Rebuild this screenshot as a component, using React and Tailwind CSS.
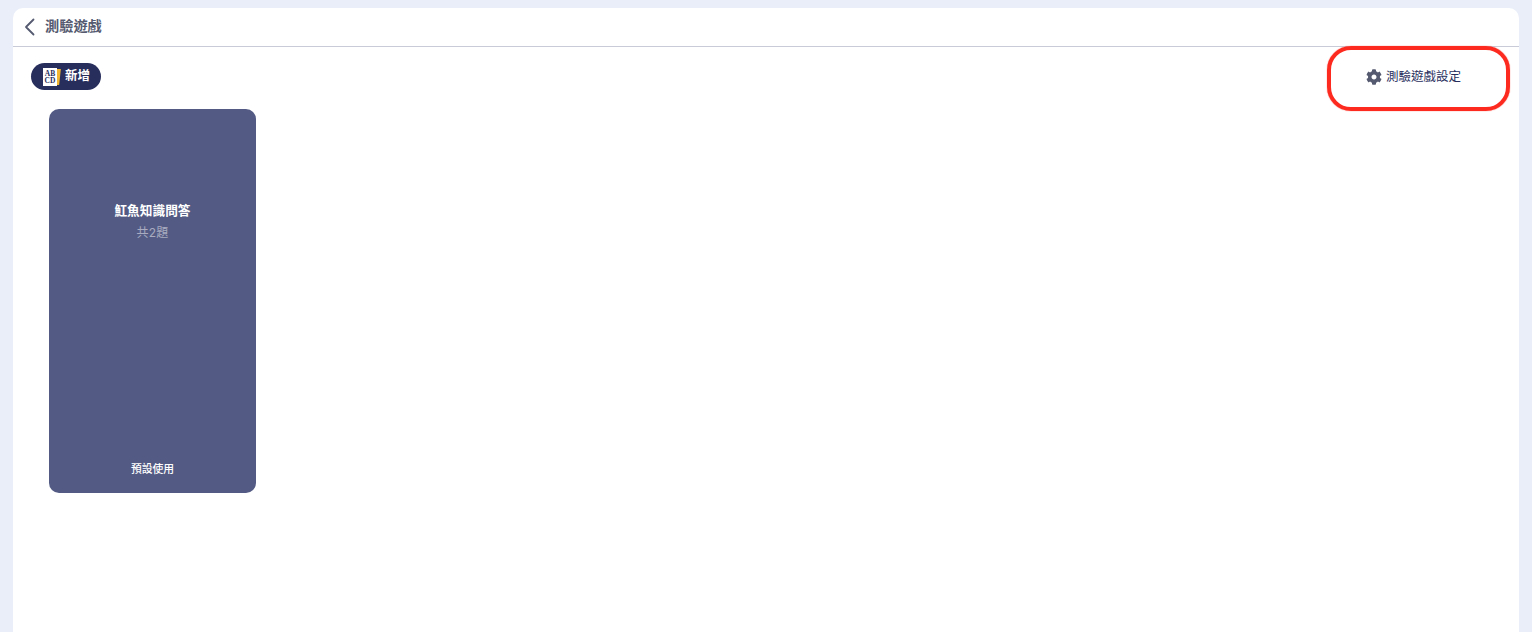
import React from 'react';
import { FaCog } from 'react-icons/fa';

const fontStack = '"Inter","Noto Sans CJK TC",sans-serif';

function QuizIcon() {
  return (
    <span className="relative block w-[18px] h-[18px] shrink-0">
      <span className="absolute left-[11px] top-[1px] w-[6px] h-[16px] bg-[#f2b632] -skew-x-6"></span>
      <span className="absolute left-0 top-0 w-[14px] h-[18px] bg-white flex flex-col items-center justify-center font-['Liberation_Serif',serif] font-bold text-[7.5px] leading-[7px] text-[#272e5c]">
        <span>AB</span>
        <span>CD</span>
      </span>
    </span>
  );
}

export default function App() {
  return (
    <div className="h-[632px] overflow-hidden bg-[#e9eef8] pt-2 pl-[13px] pr-[13px]" style={{ fontFamily: fontStack }}>
      <div className="relative h-[640px] bg-white rounded-t-[10px]">
        <div className="h-[39px] flex items-center border-b border-[#c9ccd8] pl-[9px]">
          <svg width="16" height="18" viewBox="0 0 16 18" fill="none" stroke="#555a70" strokeWidth="1.8" strokeLinecap="round" strokeLinejoin="round">
            <path d="M11.5 1.5 L4 9 L11.5 16.5" />
          </svg>
          <span className="ml-[7px] mb-[3px] text-[14.2px] leading-[20px] font-bold text-[#555a70]">測驗遊戲</span>
        </div>

        <div className="flex items-start justify-between pt-4 pl-[18px]">
          <button className="flex items-center h-[27px] w-[70px] rounded-full bg-[#272e5c] pl-3 text-white text-[12.5px] font-semibold">
            <QuizIcon />
            <span className="ml-[4px] mb-[1px]">新增</span>
          </button>
          <div className="flex items-center mr-[58px] mt-[5px] text-[12.5px] leading-[18px] text-[#272e5c]">
            <FaCog className="text-[#555a70] mr-[4px]" size={16} />
            <span>測驗遊戲設定</span>
          </div>
        </div>

        <div className="pl-9 pt-[19px]">
          <div className="w-[207px] h-[384px] rounded-[10px] bg-[#535b84] flex flex-col items-center text-white">
            <div className="mt-[93px] text-[12.7px] font-bold leading-[18px]">魟魚知識問答</div>
            <div className="mt-[5px] text-[12px] leading-[16px] text-[#a9acc0] tracking-[0.3px]">共2題</div>
            <div className="mt-auto mb-[15px] text-[10.8px] leading-[16px] font-medium">預設使用</div>
          </div>
        </div>

        {/* red annotation around settings */}
        <div className="absolute left-[1314px] top-[38px] w-[183px] h-[65px] rounded-[24px] border-[4px] border-[#fc2a1f] shadow-[0_0_1px_#fc2a1f]"></div>
      </div>
    </div>
  );
}
